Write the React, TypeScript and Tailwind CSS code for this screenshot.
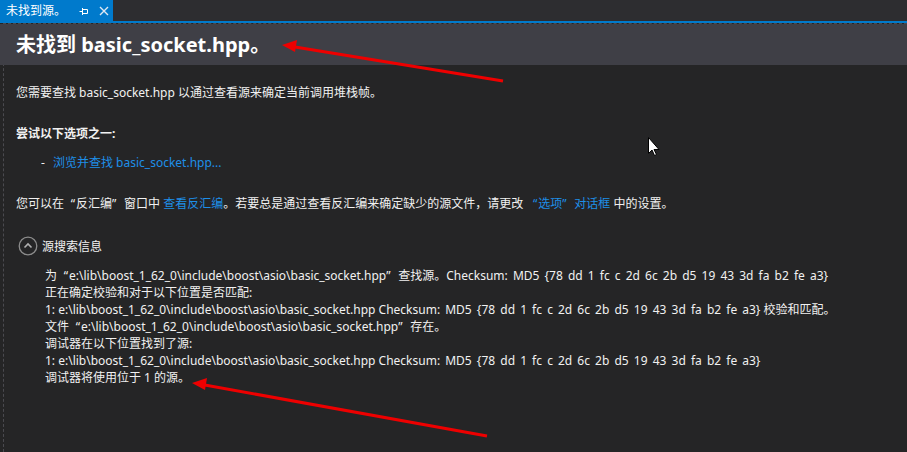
import type { ReactNode } from 'react'

const FONT = { fontFamily: '"Noto Sans", "Noto Sans CJK SC", sans-serif' }

const PATH = 'e:\\lib\\boost_1_62_0\\include\\boost\\asio\\basic_socket.hpp'
const SUM = 'Checksum: MD5 {78 dd 1 fc c 2d 6c 2b d5 19 43 3d fa b2 fe a3}'

// full-width chinese quotes
function Lq() {
  return <span className="inline-block w-[12px] text-right pr-[1px]">“</span>
}
function Rq() {
  return <span className="inline-block w-[12px] text-left">”</span>
}

function Link({ children }: { children: ReactNode }) {
  return <span className="text-[#1e8fe8]">{children}</span>
}

function Tab() {
  return (
    <div className="flex items-center h-[21px] w-[113px] bg-[#007acc] pl-[6px] text-[12px] text-white">
      <span className="leading-[21px]">未找到源。</span>
      <svg width="10" height="10" viewBox="0 0 10 10" className="ml-[13px]">
        <path d="M0.5 5.5H3.5M3.5 2V9M3.5 3.5H8.5V7.5H3.5" stroke="#fff" strokeWidth="1" fill="none" />
      </svg>
      <svg width="10" height="10" viewBox="0 0 10 10" className="ml-[10px]">
        <path d="M1 1L9 9M9 1L1 9" stroke="#dfe9f3" strokeWidth="1.4" />
      </svg>
    </div>
  )
}

function Arrows() {
  return (
    <svg className="absolute inset-0 pointer-events-none" width="907" height="452">
      <line x1="503" y1="81" x2="292" y2="46.5" stroke="#ee0000" strokeWidth="3" />
      <polygon points="282,45 297,40 295,52" fill="#ee0000" />
      <line x1="487" y1="436" x2="202" y2="384.5" stroke="#ee0000" strokeWidth="3" />
      <polygon points="192,383 207,378 205,390" fill="#ee0000" />
      {/* mouse pointer */}
      <path
        d="M648.5 137.5V153.5L652 150L654.5 155.5L656.5 154.5L654 149.5H659Z"
        fill="#ffffff"
        stroke="#000"
        strokeWidth="1"
      />
    </svg>
  )
}

export default function App() {
  const details: ReactNode[] = [
    <>
      为<Lq />
      {PATH}
      <Rq />
      查找源。<span className="[word-spacing:2px]">{SUM}</span>
    </>,
    <>正在确定校验和对于以下位置是否匹配:</>,
    <>
      1: {PATH} <span className="[word-spacing:2px]">{SUM}</span> 校验和匹配。
    </>,
    <>
      文件<Lq />
      {PATH}
      <Rq />
      存在。
    </>,
    <>调试器在以下位置找到了源:</>,
    <>
      1: {PATH} <span className="[word-spacing:2px]">{SUM}</span>
    </>,
    <>调试器将使用位于 1 的源。</>,
  ]

  return (
    <div className="relative w-[907px] h-[452px] overflow-hidden bg-[#252526] text-[#f1f1f1]" style={FONT}>
      {/* tab strip */}
      <div className="h-[21px] bg-[#2d2d30] flex">
        <Tab />
      </div>
      <div className="h-[2px] bg-[#007acc]" />

      <div className="border-l border-t border-dashed border-[#4a4a4f] ml-[3px] h-[429px]">
        {/* header band */}
        <div className="h-[41px] bg-[#3f3f46] -ml-[4px] pl-[16px] flex items-center">
          <span className="text-[20px] font-bold leading-none text-white">未找到 basic_socket.hpp。</span>
        </div>

        <div className="pl-[12px] text-[12px] leading-[17px]">
          <div className="mt-[19px]">您需要查找 basic_socket.hpp 以通过查看源来确定当前调用堆栈帧。</div>
          <div className="mt-[24px] font-bold">尝试以下选项之一:</div>
          <div className="mt-[12px] pl-[25px] flex">
            <span className="w-[12px]">-</span>
            <Link>浏览并查找 basic_socket.hpp...</Link>
          </div>
          <div className="mt-[24px] whitespace-nowrap">
            您可以在<Lq />反汇编<Rq />窗口中 <Link>查看反汇编</Link>。若要总是通过查看反汇编来确定缺少的源文件，请更改{' '}
            <Link>
              <Lq />
              选项<Rq />
              对话框
            </Link>{' '}
            中的设置。
          </div>

          <div className="mt-[24px] flex items-center gap-[4px] h-[20px] pl-[2px]">
            <svg width="20" height="20" viewBox="0 0 20 20">
              <circle cx="10" cy="10" r="8.8" stroke="#8c8c8c" strokeWidth="1.3" fill="none" />
              <path d="M6.5 11.5L10 8L13.5 11.5" stroke="#b0b0b0" strokeWidth="1.6" fill="none" />
            </svg>
            <span>源搜索信息</span>
          </div>

          <div className="mt-[11px] pl-[29px]">
            {details.map((l, i) => (
              <div key={i} className="whitespace-nowrap">
                {l}
              </div>
            ))}
          </div>
        </div>
      </div>

      <Arrows />
    </div>
  )
}
